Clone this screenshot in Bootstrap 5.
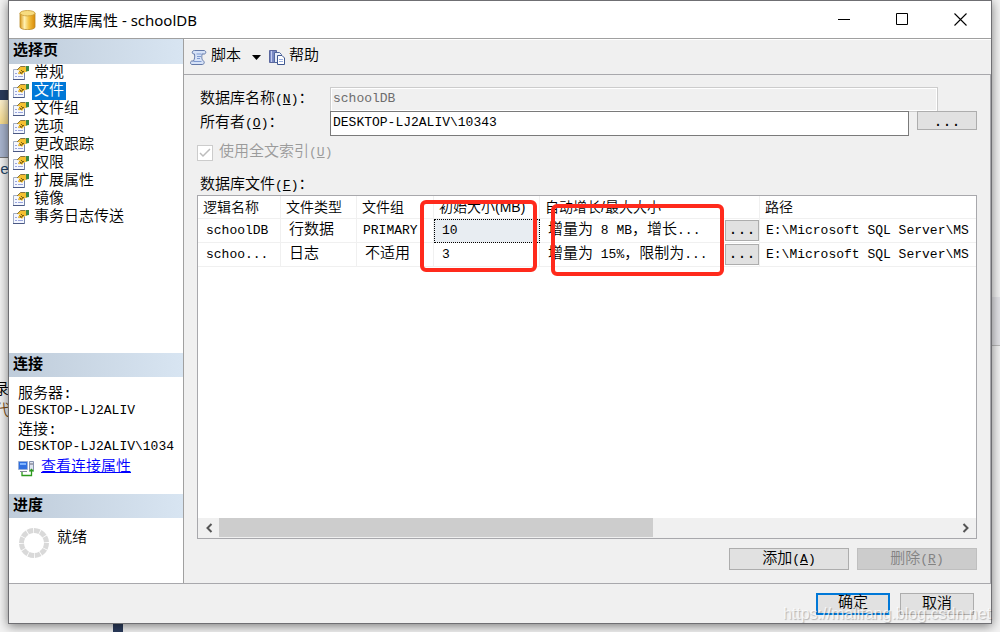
<!DOCTYPE html>
<html lang="zh-CN">
<head>
<meta charset="utf-8">
<meta name="viewport" content="width=device-width, initial-scale=1">
<title>数据库属性 - schoolDB</title>
<link href="https://cdn.jsdelivr.net/npm/bootstrap@5.3.0/dist/css/bootstrap.min.css" rel="stylesheet">
<style>
body{height:100vh;overflow:hidden;background:#f3f3f3;color:#000;font:350 15px/18px "Liberation Mono","Noto Sans CJK SC",sans-serif;position:relative}
.latin{font-family:"Liberation Mono",monospace;font-size:13px;font-weight:400}
.desk{position:absolute;inset:0;overflow:hidden}
.desk>*{position:absolute}
.strip{left:0;width:12px}
.dialog{position:relative;margin:0 8px 8px;background:#f0f0f0;border:1px solid #6f6f73;box-shadow:0 2px 10px rgba(0,0,0,.5);height:calc(100vh - 8px)}
.title-row{height:38px;background:#fff;border-bottom:1px solid #a0a0a0;padding:0 2px 0 10px;font-family:"Noto Sans","Noto Sans CJK SC",sans-serif;font-weight:400}
.title-row svg{position:static}
.title-row button{width:58px;height:37px;border:0;background:none;padding:0 0 4px}
.side{width:175px;background:#fff;border-right:1px solid #a0a0a0}
.side h2{margin:0;height:24px;font:bold 15px/20px "Noto Sans CJK SC",sans-serif;padding-left:4px;background:linear-gradient(90deg,#bfccda,#d8e5f2)}
.side h2.first{height:25px}
.tree{list-style:none;margin:0;padding:0 4px;height:289px}
.tree a{color:#000;text-decoration:none;display:flex;height:18px;align-items:center}
.tree svg{margin-right:3px}
.tree span{padding:2px 2px 0;line-height:16px}
.tree .sel{background:#0078d7;color:#fff}
.conn{height:117px;padding:9px 0 0 9px}
.conn div{height:16px;line-height:18px;white-space:nowrap}
.conn .addr{margin-bottom:4px}
.conn .props{height:20px}
.conn a{color:#00f}
.tools{height:36px;border-bottom:1px solid #a8a8ac;border-top:1px solid #fff;padding-left:6px}
.tools button{border:0;background:none;padding:0;display:flex;align-items:center;font-weight:350}
.pane{padding:12px 13px;border-right:1px solid #a8a8ac}
.field label{width:133px;padding-left:3px;flex:none}
.field input{height:25px;border:1px solid #7a7a7a;border-radius:0;padding:0 2px 3px;min-width:0}
.field input:disabled{border-color:#ccc;background:#f0f0f0;color:#6d6d6d;box-shadow:inset 0 0 0 1px #fff}
.wbtn{border:1px solid #adadad;background:#e1e1e1;padding:2px 0 0;line-height:18px;height:22px;color:#000;font-weight:350}
.wbtn:disabled{background:#ccc;border-color:#bfbfbf;color:#838383}
.wbtn.ok{border:2px solid #0078d7;padding-top:0}
.check{height:18px;color:#9b9b9b}
.check input{appearance:none;width:16px;height:16px;margin:0 6px 0 0;border:1px solid #ccc;background:#fff url("data:image/svg+xml,%3Csvg xmlns='http://www.w3.org/2000/svg' viewBox='0 0 14 14'%3E%3Cpath d='M2 7l3 3 7-7' fill='none' stroke='%23bcbcbc' stroke-width='1.5'/%3E%3C/svg%3E")}
.files{position:relative;background:#fff;border:1px solid #a8a8ac;min-height:0}
.clip{overflow:hidden}
.files table{table-layout:fixed;width:100%;border-collapse:separate;border-spacing:0}
.files th{font:350 14px/21px "Liberation Sans","Noto Sans CJK SC",sans-serif;height:23px;padding:0 5px}
.files th,.files td{border-right:1px solid #f0f0f0;border-bottom:1px solid #f0f0f0;white-space:nowrap;overflow:hidden}
.files td{height:24px;line-height:20px;padding:0 0 0 8px}
.files td.edit{background:#e8edf2;outline:1px dotted #000;outline-offset:-1px}
.files td.tight{padding-left:6px}
.files th:last-child,.files td:last-child{border-right:0}
.wbtn.dots{width:34px;height:21px;padding:0}
.hot{position:absolute;border:4px solid #ff2a1c;border-radius:6px;height:72px;pointer-events:none}
.bar{height:20px;background:#f0f0f0}
.bar button{border:0;background:none;padding:0;width:21px;height:20px;display:flex;align-items:center;justify-content:center}
.thumb{background:#cdcdcd;height:19px;width:59%}
.foot{height:40px;border-top:1px solid #a8a8ac;padding:9px 17px 0 0}
.foot .wbtn{width:74px}
.water{position:absolute;right:0;bottom:0;font:400 16px/18px "Liberation Sans",sans-serif;color:rgba(255,255,255,.75);text-shadow:1px 1px 1px rgba(0,0,0,.25);pointer-events:none}
</style>
</head>
<body>
<div class="desk" aria-hidden="true">
  <div class="strip" style="top:90px;height:10px;background:#2b3b5c"></div>
  <div class="strip" style="top:100px;height:24px;background:linear-gradient(#fff3d0,#f8dc8c)"></div>
  <div class="strip" style="top:124px;height:34px;background:#a9b5cf;border-bottom:1px solid #777"></div>
  <div style="left:0;top:162px;color:#246">en</div>
  <div style="left:-6px;top:382px">录</div>
  <div style="left:-5px;top:403px;color:#7a4a10">代</div>
  <div style="left:113px;bottom:0;width:10px;height:12px;background:#2b3b5c"></div>
  <div style="right:0;top:297px;width:12px;height:49px;background:#e4e4e8;border-bottom:1px solid #bbb"></div>
</div>

<svg width="0" height="0" class="position-absolute" aria-hidden="true">
  <defs>
    <linearGradient id="gold"><stop offset="0" stop-color="#d9981c"/><stop offset=".3" stop-color="#fff0b0"/><stop offset=".6" stop-color="#f2c040"/><stop offset="1" stop-color="#d98a08"/></linearGradient>
  </defs>
  <symbol id="prop" viewBox="0 0 16 16">
    <path d="M.5 4.500h11v10H.5z" fill="#f4f7ff" stroke="#a3aec4"/><path d="M0 14.500h12" stroke="#4a5884"/><path d="M11.500 8v7" stroke="#7483a8"/>
    <path d="M2 8.500h2M5 8.500h3M2 11.500h2M5 11.500h5" stroke="#9aa5dc"/>
    <path d="M4 5l3.500-3.500h5l1.500 2v3l-3 1-2 2.500L7.500 8.500 6 9.500 5 8l2-2.500z" fill="#f5c030"/>
    <path d="M4 5l3.500-3.500h5" fill="none" stroke="#8a7440"/>
    <path d="M13 1h3v5l-3 .5z" fill="#3b8a48"/><path d="M6.500 6.500l2 2M8 5l2 2M9.500 7l-2 2M11 6L9.500 7.500" stroke="#6b5312" stroke-width=".9"/>
  </symbol>
</svg>

<div class="dialog d-flex flex-column">
  <header class="title-row d-flex align-items-center flex-shrink-0">
    <svg width="17" height="20" viewBox="0 0 17 20" style="margin-right:7px"><path d="M1 3v14c0 3.500 15 3.500 15 0V3z" fill="url(#gold)" stroke="#b98a2a" stroke-width=".8"/><ellipse cx="8.500" cy="3.200" rx="7.500" ry="2.700" fill="#f7dc80" stroke="#c99a35" stroke-width=".8"/></svg>
    <span class="me-auto">数据库属性 - schoolDB</span>
    <button aria-label="最小化"><svg width="13" height="13"><path d="M0 6.500h12" stroke="#000"/></svg></button>
    <button aria-label="最大化"><svg width="13" height="13"><path d="M.5.500h11v11H.5z" fill="none" stroke="#000"/></svg></button>
    <button aria-label="关闭"><svg width="13" height="13"><path d="M.5.500l12 12M12.500.500l-12 12" stroke="#000" stroke-width="1.100"/></svg></button>
  </header>

  <div class="d-flex flex-grow-1" style="min-height:0">
    <aside class="side flex-shrink-0">
      <h2 class="first">选择页</h2>
      <ul class="tree">
        <li><a href="#"><svg width="16" height="16"><use href="#prop"/></svg><span>常规</span></a></li>
        <li><a href="#"><svg width="16" height="16"><use href="#prop"/></svg><span class="sel">文件</span></a></li>
        <li><a href="#"><svg width="16" height="16"><use href="#prop"/></svg><span>文件组</span></a></li>
        <li><a href="#"><svg width="16" height="16"><use href="#prop"/></svg><span>选项</span></a></li>
        <li><a href="#"><svg width="16" height="16"><use href="#prop"/></svg><span>更改跟踪</span></a></li>
        <li><a href="#"><svg width="16" height="16"><use href="#prop"/></svg><span>权限</span></a></li>
        <li><a href="#"><svg width="16" height="16"><use href="#prop"/></svg><span>扩展属性</span></a></li>
        <li><a href="#"><svg width="16" height="16"><use href="#prop"/></svg><span>镜像</span></a></li>
        <li><a href="#"><svg width="16" height="16"><use href="#prop"/></svg><span>事务日志传送</span></a></li>
      </ul>
      <h2>连接</h2>
      <div class="conn">
        <div>服务器:</div>
        <div class="addr latin">DESKTOP-LJ2ALIV</div>
        <div>连接:</div>
        <div class="addr latin">DESKTOP-LJ2ALIV\1034</div>
        <div class="props d-flex align-items-center">
          <svg width="17" height="17" viewBox="0 0 17 17" style="margin-right:6px"><path d="M.5 1.500h9v8h-9z" fill="#2f6fe0" stroke="#9ab0d8"/><path d="M2 3h6v2H2z" fill="#7fb4ff"/><path d="M2 11.500h7" stroke="#889"/><path d="M11.500 1.500h4v9h-4z" fill="#dde3f0" stroke="#8895b0"/><path d="M12 4h3" stroke="#667"/><path d="M4 12v3.500h9.500V10M11.500 11.500l2-2 2 2" fill="none" stroke="#2c9a1c" stroke-width="1.300"/></svg>
          <a href="#">查看连接属性</a>
        </div>
      </div>
      <h2>进度</h2>
      <div class="d-flex" style="padding:8px 0 0 9px">
        <svg width="32" height="32" viewBox="0 0 32 32" style="margin-right:7px"><circle cx="16" cy="17" r="12.500" fill="none" stroke="#d9d9d9" stroke-width="5" pathLength="120" stroke-dasharray="8.800 1.200"/></svg>
        <span class="pt-1">就绪</span>
      </div>
    </aside>

    <div class="d-flex flex-column flex-grow-1" style="min-width:0">
      <div class="tools d-flex align-items-center flex-shrink-0">
        <button><svg width="17" height="17" viewBox="0 0 17 17" class="me-1"><path d="M4.500 1.500c-3 0-3 4 0 3.500.5 3 0 5-1 7H2c-2 0-2 3.500 0 3.500h10c2 0 3-2 1.500-3.500C11 10 12 7 12 5h2.500c2-.5 1.500-3.500-.5-3.500z" fill="#d6e2f7" stroke="#6379a8"/><path d="M6.500 5h5M7 7.500h4M7 9.500h3M3.500 12.500h8" stroke="#7f9ad0"/></svg>脚本</button>
        <button aria-label="更多" class="ms-2" style="padding:0 1px 0 3px;margin-right:7px"><svg width="9" height="5"><path d="M0 0h9L4.500 5z"/></svg></button>
        <button><svg width="17" height="17" viewBox="0 0 17 17" style="margin-right:3px"><path d="M.5 1.500h7v12h-7z" fill="#7b8bc6" stroke="#5a679e"/><path d="M2.500 2v11" stroke="#c3cdef"/><path d="M5.500 3.500h5l2 2v8h-7z" fill="#e9effb" stroke="#52689c"/><path d="M8.500 6.500h4.500l2.500 2.500v6.500h-7z" fill="#fff" stroke="#405890"/><path d="M10 10.500h4M10 12.500h4" stroke="#9aaede"/></svg>帮助</button>
      </div>

      <main class="pane d-flex flex-column flex-grow-1" style="min-height:0">
        <div class="field d-flex" style="height:24px">
          <label for="dbname" class="pt-1">数据库名称<span class="latin">(<u>N</u>)</span>：</label>
          <input id="dbname" class="latin flex-grow-1" value="schoolDB" disabled style="margin-right:39px">
        </div>
        <div class="field d-flex">
          <label for="owner" class="pt-1">所有者<span class="latin">(<u>O</u>)</span>：</label>
          <input id="owner" class="latin flex-grow-1" value="DESKTOP-LJ2ALIV\10343">
          <button class="wbtn ms-2" style="width:60px;height:19px" aria-label="浏览">...</button>
        </div>
        <div class="check d-flex align-items-center mt-2">
          <input type="checkbox" id="ft" checked disabled><label for="ft">使用全文索引<span class="latin">(<u>U</u>)</span></label>
        </div>
        <div style="padding:15px 0 0 3px">数据库文件<span class="latin">(<u>F</u>)</span>：</div>

        <div class="files d-flex flex-column flex-grow-1">
          <div class="clip flex-grow-1">
            <table>
              <colgroup><col style="width:83px"><col style="width:76px"><col style="width:77px"><col style="width:106px"><col style="width:220px"><col></colgroup>
              <thead><tr><th>逻辑名称</th><th>文件类型</th><th>文件组</th><th>初始大小(MB)</th><th>自动增长/最大大小</th><th>路径</th></tr></thead>
              <tbody>
                <tr><td class="latin">schoolDB</td><td>行数据</td><td class="latin tight">PRIMARY</td><td class="latin edit">10</td><td><div class="d-flex align-items-center"><span class="me-auto">增量为<span class="latin"> 8 MB</span>，增长<span class="latin">...</span></span><button class="wbtn dots" aria-label="更改">...</button></div></td><td class="latin tight">E:\Microsoft SQL Server\MS</td></tr>
                <tr><td class="latin">schoo...</td><td>日志</td><td>不适用</td><td class="latin">3</td><td><div class="d-flex align-items-center"><span class="me-auto">增量为<span class="latin"> 15%</span>，限制为<span class="latin">...</span></span><button class="wbtn dots" aria-label="更改">...</button></div></td><td class="latin tight">E:\Microsoft SQL Server\MS</td></tr>
              </tbody>
            </table>
          </div>
          <div class="bar d-flex flex-shrink-0">
            <button aria-label="向左"><svg width="8" height="10"><path d="M6.500 1l-4 4 4 4" fill="none" stroke="#555" stroke-width="2"/></svg></button>
            <div class="flex-grow-1"><div class="thumb"></div></div>
            <button aria-label="向右"><svg width="8" height="10"><path d="M1.500 1l4 4-4 4" fill="none" stroke="#555" stroke-width="2"/></svg></button>
          </div>
          <div class="hot" style="left:222px;top:4px;width:117px"></div>
          <div class="hot" style="left:353px;top:8px;width:173px"></div>
        </div>

        <div class="d-flex justify-content-end gap-2" style="padding-top:9px;padding-bottom:1px">
          <button class="wbtn" style="width:120px">添加<span class="latin">(<u>A</u>)</span></button>
          <button class="wbtn" style="width:120px" disabled>删除<span class="latin">(<u>R</u>)</span></button>
        </div>
      </main>
    </div>
  </div>

  <footer class="foot d-flex justify-content-end flex-shrink-0">
    <button class="wbtn ok" style="margin-right:10px">确定</button>
    <button class="wbtn">取消</button>
  </footer>
  <div class="water">https://malifang.blog.csdn.net</div>
</div>
<script src="https://cdn.jsdelivr.net/npm/bootstrap@5.3.0/dist/js/bootstrap.bundle.min.js"></script>
</body>
</html>
